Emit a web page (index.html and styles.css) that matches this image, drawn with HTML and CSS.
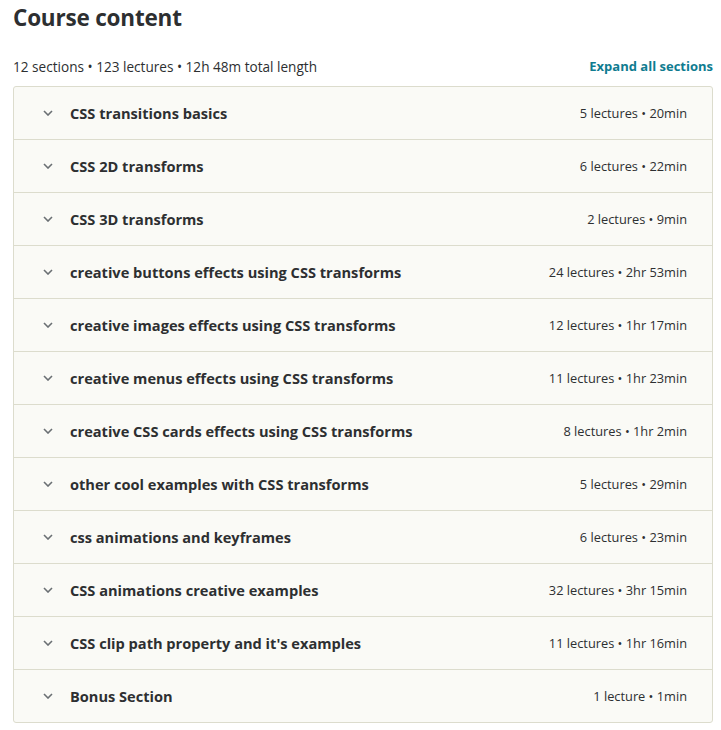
FILE: index.html
```html
<!DOCTYPE html>
<html>
<head>
<meta charset="utf-8">
<link rel="stylesheet" href="styles.css">
</head>
<body>
<div class="page">
  <h2 class="title">Course content</h2>
  <div class="meta">
    <span class="summary">12 sections • 123 lectures • 12h 48m total length</span>
    <a class="expand">Expand all sections</a>
  </div>
  <div class="sections">
    <div class="row"><span class="chev"><svg width="10" height="6" viewBox="0 0 10 6"><path d="M1 1l4 4 4-4" fill="none" stroke="#6a6f73" stroke-width="1.6"/></svg></span><span class="name">CSS transitions basics</span><span class="info">5 lectures • 20min</span></div>
    <div class="row"><span class="chev"><svg width="10" height="6" viewBox="0 0 10 6"><path d="M1 1l4 4 4-4" fill="none" stroke="#6a6f73" stroke-width="1.6"/></svg></span><span class="name">CSS 2D transforms</span><span class="info">6 lectures • 22min</span></div>
    <div class="row"><span class="chev"><svg width="10" height="6" viewBox="0 0 10 6"><path d="M1 1l4 4 4-4" fill="none" stroke="#6a6f73" stroke-width="1.6"/></svg></span><span class="name">CSS 3D transforms</span><span class="info">2 lectures • 9min</span></div>
    <div class="row"><span class="chev"><svg width="10" height="6" viewBox="0 0 10 6"><path d="M1 1l4 4 4-4" fill="none" stroke="#6a6f73" stroke-width="1.6"/></svg></span><span class="name">creative buttons effects using CSS transforms</span><span class="info">24 lectures • 2hr 53min</span></div>
    <div class="row"><span class="chev"><svg width="10" height="6" viewBox="0 0 10 6"><path d="M1 1l4 4 4-4" fill="none" stroke="#6a6f73" stroke-width="1.6"/></svg></span><span class="name">creative images effects using CSS transforms</span><span class="info">12 lectures • 1hr 17min</span></div>
    <div class="row"><span class="chev"><svg width="10" height="6" viewBox="0 0 10 6"><path d="M1 1l4 4 4-4" fill="none" stroke="#6a6f73" stroke-width="1.6"/></svg></span><span class="name">creative menus effects using CSS transforms</span><span class="info">11 lectures • 1hr 23min</span></div>
    <div class="row"><span class="chev"><svg width="10" height="6" viewBox="0 0 10 6"><path d="M1 1l4 4 4-4" fill="none" stroke="#6a6f73" stroke-width="1.6"/></svg></span><span class="name">creative CSS cards effects using CSS transforms</span><span class="info">8 lectures • 1hr 2min</span></div>
    <div class="row"><span class="chev"><svg width="10" height="6" viewBox="0 0 10 6"><path d="M1 1l4 4 4-4" fill="none" stroke="#6a6f73" stroke-width="1.6"/></svg></span><span class="name">other cool examples with CSS transforms</span><span class="info">5 lectures • 29min</span></div>
    <div class="row"><span class="chev"><svg width="10" height="6" viewBox="0 0 10 6"><path d="M1 1l4 4 4-4" fill="none" stroke="#6a6f73" stroke-width="1.6"/></svg></span><span class="name">css animations and keyframes</span><span class="info">6 lectures • 23min</span></div>
    <div class="row"><span class="chev"><svg width="10" height="6" viewBox="0 0 10 6"><path d="M1 1l4 4 4-4" fill="none" stroke="#6a6f73" stroke-width="1.6"/></svg></span><span class="name">CSS animations creative examples</span><span class="info">32 lectures • 3hr 15min</span></div>
    <div class="row"><span class="chev"><svg width="10" height="6" viewBox="0 0 10 6"><path d="M1 1l4 4 4-4" fill="none" stroke="#6a6f73" stroke-width="1.6"/></svg></span><span class="name">CSS clip path property and it's examples</span><span class="info">11 lectures • 1hr 16min</span></div>
    <div class="row"><span class="chev"><svg width="10" height="6" viewBox="0 0 10 6"><path d="M1 1l4 4 4-4" fill="none" stroke="#6a6f73" stroke-width="1.6"/></svg></span><span class="name">Bonus Section</span><span class="info">1 lecture • 1min</span></div>
  </div>
</div>
</body>
</html>
```

FILE: styles.css
```css
html, body {
  margin: 0;
  padding: 0;
  background: #ffffff;
}
body {
  font-family: "Open Sans", "Noto Sans", sans-serif;
  color: #2d2f31;
}
.page {
  padding: 0 8px 0 13px;
  width: 700px;
}
.title {
  margin: 0;
  padding-top: 3px;
  font-size: 22.5px;
  line-height: 30px;
  font-weight: 700;
  letter-spacing: -0.2px;
}
.meta {
  display: flex;
  justify-content: space-between;
  align-items: center;
  margin-top: 21px;
  height: 24px;
  margin-bottom: 8px;
}
.summary {
  font-size: 13.6px;
  color: #2d2f31;
}
.expand {
  font-size: 13px;
  font-weight: 700;
  color: #0f7c90;
}
.sections {
  border: 1px solid #dcdccd;
  border-radius: 3px;
  background: #fafaf6;
}
.row {
  display: flex;
  align-items: center;
  height: 52px;
  border-bottom: 1px solid #dcdccd;
  padding: 0 25px 0 29px;
}
.row:last-child {
  border-bottom: none;
}
.chev {
  width: 27px;
  display: flex;
  align-items: center;
}
.chev svg {
  display: block;
}
.name {
  flex: 1;
  font-size: 14.6px;
  font-weight: 700;
  color: #2d2f31;
}
.info {
  font-size: 12.8px;
  color: #2d2f31;
}
```
